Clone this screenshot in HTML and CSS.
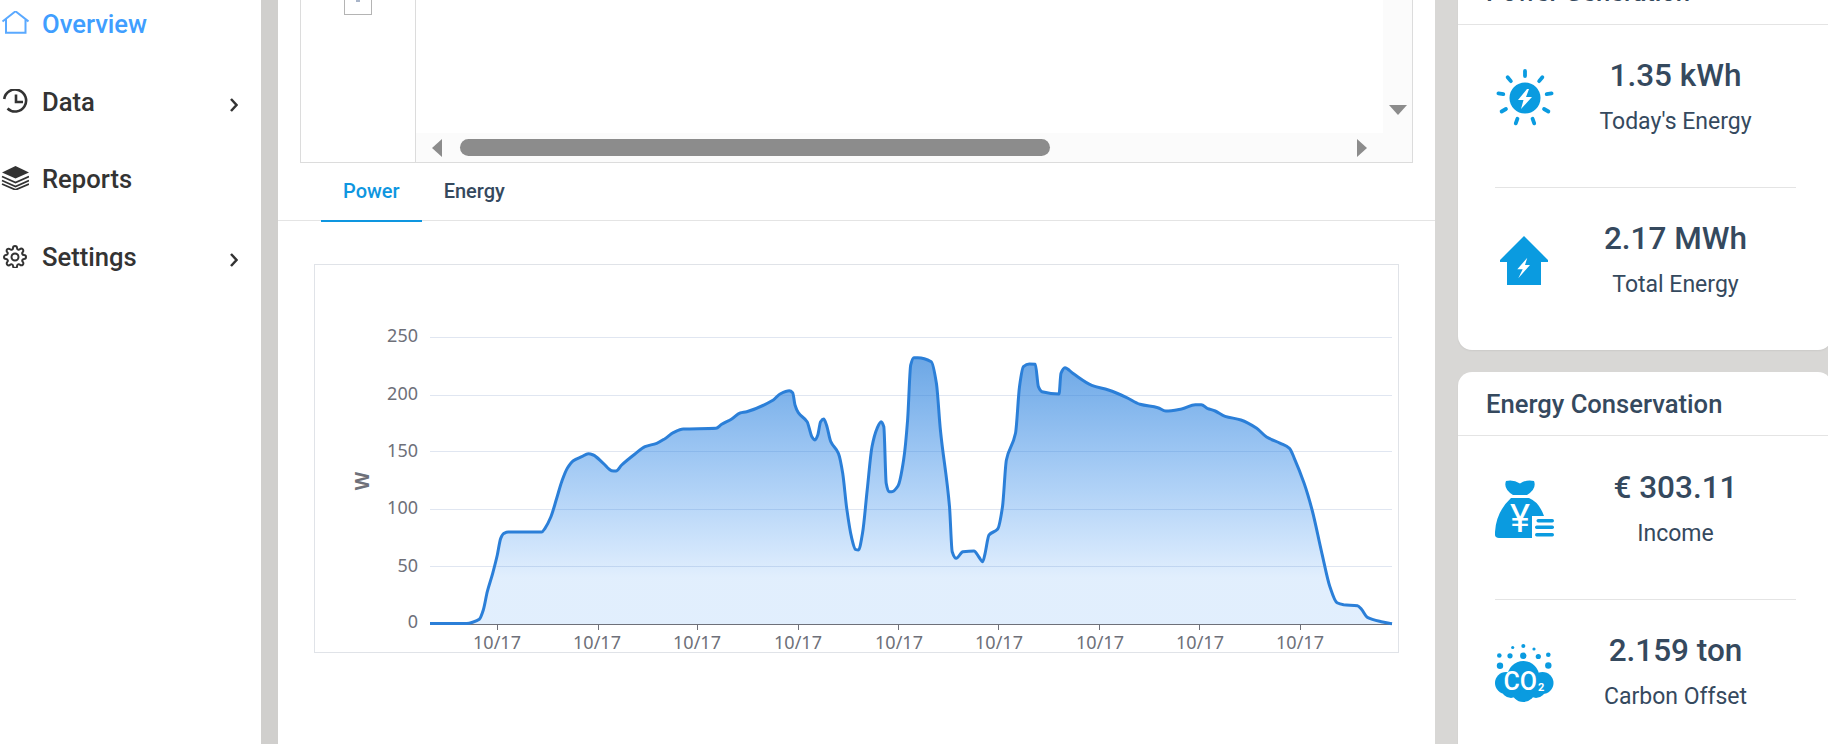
FILE: index.html
```html
<!DOCTYPE html>
<html lang="en">
<head>
<meta charset="utf-8">
<title>Overview</title>
<link rel="stylesheet" href="styles.css">
</head>
<body>
<div class="page">
  <nav class="sidebar">
    <a class="nav-item active">
      <svg class="nav-icon" viewBox="0 0 28 24"><path d="M1.500 10.500 14.500 .3 27.500 10.500M5 8V21.800H24.500V8" fill="none" stroke="#5aa9ff" stroke-width="2"/></svg>
      <span>Overview</span>
    </a>
    <a class="nav-item">
      <svg class="nav-icon" viewBox="0 0 28 24"><path d="M6.500 19.500A11 11 0 1 0 3.200 10" fill="none" stroke="#333" stroke-width="2.600"/><path d="M15 5.500V13H22" fill="none" stroke="#333" stroke-width="2.600"/></svg>
      <span>Data</span>
      <svg class="chevron" viewBox="0 0 8 14"><path d="M1 1 6.500 7 1 13" fill="none" stroke="#333" stroke-width="2.500"/></svg>
    </a>
    <a class="nav-item">
      <svg class="nav-icon" viewBox="0 0 28 24"><path d="M14.500 0 28 6.500 14.500 12.500 1 6.500Z" fill="#333"/><path d="M1 10.500 14.500 16.500 28 10.500M1 14.500 14.500 20.500 28 14.500M1 18 14.500 23.800 28 18" fill="none" stroke="#333" stroke-width="1.800"/></svg>
      <span>Reports</span>
    </a>
    <a class="nav-item">
      <svg class="nav-icon" viewBox="-2 -1 28 24"><g fill="none" stroke="#333" stroke-width="2"><circle cx="12" cy="12" r="3.500"/><path d="M19.400 15a1.650 1.650 0 0 0 .33 1.820l.06.06a2 2 0 0 1 0 2.830 2 2 0 0 1-2.830 0l-.06-.06a1.650 1.650 0 0 0-1.820-.33 1.650 1.650 0 0 0-1 1.510V21a2 2 0 0 1-2 2 2 2 0 0 1-2-2v-.09A1.650 1.650 0 0 0 9 19.400a1.650 1.650 0 0 0-1.820.33l-.06.06a2 2 0 0 1-2.830 0 2 2 0 0 1 0-2.830l.06-.06a1.650 1.650 0 0 0 .33-1.820 1.650 1.650 0 0 0-1.510-1H3a2 2 0 0 1-2-2 2 2 0 0 1 2-2h.09A1.650 1.650 0 0 0 4.600 9a1.650 1.650 0 0 0-.33-1.820l-.06-.06a2 2 0 0 1 0-2.830 2 2 0 0 1 2.830 0l.06.06a1.650 1.650 0 0 0 1.820.33H9a1.650 1.650 0 0 0 1-1.510V3a2 2 0 0 1 2-2 2 2 0 0 1 2 2v.09a1.650 1.650 0 0 0 1 1.510 1.650 1.650 0 0 0 1.820-.33l.06-.06a2 2 0 0 1 2.830 0 2 2 0 0 1 0 2.830l-.06.06a1.650 1.650 0 0 0-.33 1.820V9a1.650 1.650 0 0 0 1.510 1H21a2 2 0 0 1 2 2 2 2 0 0 1-2 2h-.09a1.650 1.650 0 0 0-1.510 1z"/></g></svg>
      <span>Settings</span>
      <svg class="chevron" viewBox="0 0 8 14"><path d="M1 1 6.500 7 1 13" fill="none" stroke="#333" stroke-width="2.500"/></svg>
    </a>
  </nav>

  <main class="main">
    <section class="table-box">
      <div class="table-fixed"><div class="checkbox"><i class="check-mark"></i></div></div>
      <div class="table-body">
        <div class="table-upper">
          <div class="table-cells"></div>
          <div class="vtrack"><i class="arrow-down"></i></div>
        </div>
        <div class="htrack"><i class="arrow-left"></i><div class="thumb"></div><i class="arrow-right"></i></div>
      </div>
    </section>

    <div class="tabs">
      <div class="tab active">Power</div>
      <div class="tab">Energy</div>
    </div>

    <section class="chart-frame">
      <svg class="chart" viewBox="315 265 1083 387">
        <defs>
          <linearGradient id="areaFill" gradientUnits="userSpaceOnUse" x1="0" y1="345" x2="0" y2="578">
            <stop offset="0" stop-color="#2b7fd8" stop-opacity=".72"/>
            <stop offset="1" stop-color="#1a80f0" stop-opacity=".13"/>
          </linearGradient>
        </defs>
        <g class="grid">
          <line x1="430" x2="1392" y1="337.500" y2="337.500"/>
          <line x1="430" x2="1392" y1="395.500" y2="395.500"/>
          <line x1="430" x2="1392" y1="451.500" y2="451.500"/>
          <line x1="430" x2="1392" y1="509.500" y2="509.500"/>
          <line x1="430" x2="1392" y1="566.500" y2="566.500"/>
        </g>
        <path id="chartArea" fill="url(#areaFill)"/>
        <g class="axis">
          <line x1="430" x2="1392" y1="624.500" y2="624.500"/>
          <line x1="497.500" x2="497.500" y1="624" y2="630"/>
          <line x1="598.500" x2="598.500" y1="624" y2="630"/>
          <line x1="697.500" x2="697.500" y1="624" y2="630"/>
          <line x1="798.500" x2="798.500" y1="624" y2="630"/>
          <line x1="898.500" x2="898.500" y1="624" y2="630"/>
          <line x1="998.500" x2="998.500" y1="624" y2="630"/>
          <line x1="1099.500" x2="1099.500" y1="624" y2="630"/>
          <line x1="1199.500" x2="1199.500" y1="624" y2="630"/>
          <line x1="1300.500" x2="1300.500" y1="624" y2="630"/>
        </g>
        <path id="chartLine" class="series"/>
        <g class="y-labels">
          <text x="418" y="335">250</text>
          <text x="418" y="393">200</text>
          <text x="418" y="450">150</text>
          <text x="418" y="507">100</text>
          <text x="418" y="565">50</text>
          <text x="418" y="621">0</text>
        </g>
        <g class="x-labels">
          <text x="497" y="642">10/17</text>
          <text x="597" y="642">10/17</text>
          <text x="697" y="642">10/17</text>
          <text x="798" y="642">10/17</text>
          <text x="899" y="642">10/17</text>
          <text x="999" y="642">10/17</text>
          <text x="1100" y="642">10/17</text>
          <text x="1200" y="642">10/17</text>
          <text x="1300" y="642">10/17</text>
        </g>
        <text class="y-name" transform="translate(362 481) rotate(-90)">W</text>
      </svg>
    </section>
  </main>

  <aside class="side">
    <section class="card card-first">
      <h2 class="card-title">Power Generation</h2>
      <div class="stat">
        <svg class="stat-icon" viewBox="0 0 60 60">
          <g class="sun-rays">
            <line x1="30" y1="8" x2="30" y2="3"/>
            <line x1="30" y1="8" x2="30" y2="3" transform="rotate(40 30 30)"/>
            <line x1="30" y1="8" x2="30" y2="3" transform="rotate(80 30 30)"/>
            <line x1="30" y1="8" x2="30" y2="3" transform="rotate(120 30 30)"/>
            <line x1="30" y1="8" x2="30" y2="3" transform="rotate(160 30 30)"/>
            <line x1="30" y1="8" x2="30" y2="3" transform="rotate(200 30 30)"/>
            <line x1="30" y1="8" x2="30" y2="3" transform="rotate(240 30 30)"/>
            <line x1="30" y1="8" x2="30" y2="3" transform="rotate(280 30 30)"/>
            <line x1="30" y1="8" x2="30" y2="3" transform="rotate(320 30 30)"/>
          </g>
          <circle cx="30" cy="30" r="15.500" fill="#0a9be0"/>
          <path d="M32 21 23 32H28.500L26 41 37 29H31L34 21Z" fill="#fff"/>
        </svg>
        <div class="stat-text"><div class="stat-value">1.35 kWh</div><div class="stat-label">Today's Energy</div></div>
      </div>
      <div class="stat">
        <svg class="stat-icon" viewBox="0 0 60 60">
          <path d="M29 5 53 29V31H46V54H12V31H5V29Z" fill="#0a9be0"/>
          <path d="M32.300 26.700 22.300 38.300H27.700L23.300 47.300 35 34H30L32.300 26.700Z" fill="#fff"/>
        </svg>
        <div class="stat-text"><div class="stat-value">2.17 MWh</div><div class="stat-label">Total Energy</div></div>
      </div>
    </section>

    <section class="card">
      <h2 class="card-title">Energy Conservation</h2>
      <div class="stat">
        <svg class="stat-icon" viewBox="0 0 60 60">
          <path d="M11 1Q18 -1 25 3.500 32 -1 39 1 42 9 32 15H18Q8 9 11 1Z" fill="#0a9be0"/>
          <path d="M16 18H34Q44 22 49 36V58H4Q-1 58 0 52 1 32 16 18Z" fill="#0a9be0"/>
          <rect x="37" y="36" width="23" height="24" fill="#fff"/>
          <rect x="41.500" y="39" width="17.500" height="3.500" rx="1.700" fill="#0a9be0"/>
          <rect x="40" y="45.500" width="19" height="3.500" rx="1.700" fill="#0a9be0"/>
          <rect x="40" y="53" width="19" height="3.500" rx="1.700" fill="#0a9be0"/>
          <text class="yen" x="25" y="52">¥</text>
        </svg>
        <div class="stat-text"><div class="stat-value">€ 303.11</div><div class="stat-label">Income</div></div>
      </div>
      <div class="stat">
        <svg class="stat-icon" viewBox="0 0 60 60">
          <g fill="#0a9be0">
            <circle cx="28.300" cy="3" r="2"/><circle cx="17.700" cy="4.500" r="1.600"/><circle cx="39" cy="6" r="1.600"/>
            <circle cx="4.300" cy="12.500" r="2.300"/><circle cx="15" cy="12.800" r="2.600"/><circle cx="28.300" cy="12.800" r="3.200"/><circle cx="43.300" cy="13.500" r="2.600"/><circle cx="53.300" cy="11.800" r="2.300"/>
            <circle cx="5" cy="22.800" r="3.200"/><circle cx="53.300" cy="22.500" r="3.200"/>
            <circle cx="28.300" cy="34" r="16"/><circle cx="11" cy="40" r="11"/><circle cx="47.500" cy="40" r="11"/><circle cx="28.300" cy="47" r="12"/><circle cx="16" cy="45" r="10"/><circle cx="41" cy="45" r="10"/>
          </g>
          <text class="co" x="8.500" y="47">CO</text>
          <text class="co-sub" x="43" y="48">2</text>
        </svg>
        <div class="stat-text"><div class="stat-value">2.159 ton</div><div class="stat-label">Carbon Offset</div></div>
      </div>
    </section>
  </aside>
</div>
<script src="chart.js"></script>
</body>
</html>
```
FILE: styles.css
```css
* { box-sizing: border-box; }
html, body { margin: 0; height: 744px; overflow: hidden; }
body { font-family: Roboto, "Liberation Sans", sans-serif; background: #d8d7d5; color: #35495e; }

.page { display: flex; height: 744px; overflow: hidden; }

/* sidebar */
.sidebar { width: 278px; flex: none; background: #fff; border-right: 17px solid #d0cfcd; }
.nav-item { display: flex; align-items: center; height: 77.6px; padding-left: 1px; font-size: 25.600px; font-weight: 500; color: #333; }
.nav-item:first-child { margin-top: -14.500px; }
.nav-item.active { color: #409eff; }
.nav-icon { width: 28px; height: 24px; margin: 0 13px 2px 0; flex: none; }
.chevron { width: 8px; height: 14px; margin: 6px 23px 0 auto; }

/* main column */
.main { width: 1157px; flex: none; height: 744px; background: #fff; }

.table-box { display: flex; height: 163px; margin: 0 22px; border: 1px solid #dcdcdc; border-top: 0; overflow: hidden; }
.table-fixed { width: 115px; flex: none; border-right: 1px solid #dcdcdc; }
.checkbox { display: flex; justify-content: center; width: 28px; height: 28px; margin: -13px 0 0 43px; border: 1px solid #b4b4b4; }
.check-mark { width: 4px; height: 2px; margin-top: 12px; background: #a9b5c9; }
.table-body { flex: 1; display: flex; flex-direction: column; }
.table-upper { flex: 1; display: flex; }
.table-cells { flex: 1; }
.vtrack { width: 29px; background: #fbfbfb; display: flex; justify-content: center; align-items: flex-end; padding-bottom: 18px; }
.htrack { height: 29px; background: #fbfbfb; display: flex; align-items: center; padding: 0 45px 0 16px; }
.arrow-down { width: 0; height: 0; border-style: solid; border-width: 10px 9.500px 0; border-color: #8c8c8c transparent transparent; }
.arrow-left { width: 0; height: 0; border-style: solid; border-width: 9.500px 10px 9.500px 0; border-color: transparent #8c8c8c transparent transparent; }
.arrow-right { width: 0; height: 0; margin-left: auto; border-style: solid; border-width: 9.500px 0 9.500px 10px; border-color: transparent transparent transparent #8c8c8c; }
.thumb { width: 590px; height: 17px; margin-left: 18px; border-radius: 9px; background: #8c8c8c; }

.tabs { display: flex; height: 59px; padding-left: 43px; background: linear-gradient(#e4e4e4, #e4e4e4) 0 57px / 100% 1px no-repeat; }
.tab { display: flex; align-items: center; padding: 0 22px 3px; font-size: 20px; font-weight: 500; color: #35495e; }
.tab.active { color: #0e96e0; border-bottom: 2px solid #0e96e0; padding-bottom: 1px; }

.chart-frame { height: 389px; margin: 42px 36px 0; border: 1px solid #e0e3e8; }
.chart { display: block; width: 1083px; height: 387px; overflow: visible; }
.grid line { stroke: #e0e6f1; stroke-width: 1; }
.axis line { stroke: #6e7079; stroke-width: 1; }
.series { fill: none; stroke: #2b7fd8; stroke-width: 3; stroke-linejoin: round; }
.y-labels text, .x-labels text { font-family: "Noto Sans", sans-serif; font-size: 18px; fill: #6e7079; dominant-baseline: central; }
.y-labels text { text-anchor: end; }
.x-labels text { text-anchor: middle; }
.y-name { font-family: "Noto Sans", sans-serif; font-size: 19px; font-weight: 700; fill: #6e7079; text-anchor: middle; dominant-baseline: central; }

/* right column: the cards run a few pixels past the window edge */
.side { width: 374px; flex: none; margin-left: 23px; }
.card { background: #fff; border-radius: 14px; box-shadow: 0 1px 2px rgba(0, 0, 0, .06); }
.card-first { margin-top: -39.500px; margin-bottom: 22.500px; }
.card-title { height: 64px; margin: 0; padding: 0 0 0 28px; display: flex; align-items: center; border-bottom: 1px solid #e4e4e4; font-size: 25.600px; font-weight: 500; color: #35495e; }
.stat { display: flex; align-items: center; height: 162.500px; margin: 0 36px 0 37px; padding-bottom: 13px; }
.stat + .stat { border-top: 1px solid #e4e4e4; }
.stat-icon { width: 60px; height: 60px; flex: none; margin-bottom: 2px; }
.stat-text { flex: 1; text-align: center; }
.stat-value { font-size: 31.500px; font-weight: 500; line-height: 46px; color: #35495e; }
.stat-label { font-size: 23px; line-height: 46px; color: #35495e; }
.sun-rays line { stroke: #0a9be0; stroke-width: 3.800; stroke-linecap: round; }
.yen { font-family: Roboto, sans-serif; font-size: 38px; font-weight: 400; fill: #fff; text-anchor: middle; }
.co { font-family: Roboto, sans-serif; font-size: 25px; font-weight: 500; fill: #fff; }
.co-sub { font-family: Roboto, sans-serif; font-size: 11px; font-weight: 700; fill: #fff; }
```
FILE: chart.js
```js
// Power series, in chart pixel coordinates (x, y).
var points = [
  [430,623.5],[466.7,623.5],[473.3,622],[479.3,619.3],[483.3,610],[487.3,591.7],[492.7,573.3],[497.3,555],
  [500.7,538.3],[504,533.3],[508.3,532],[541.7,532],[545,528.3],[550.7,517.3],[556.7,498.3],[561.7,481.7],
  [567.3,468.3],[573.3,460.7],[581.7,456.7],[588.3,453.7],[593.3,455],[603.3,463.3],[611.7,470.7],[616,471],
  [621.7,465],[635,454],[645,446.7],[656.7,443.3],[665,438.7],[673.3,432.7],[683.3,429],[716,428.3],
  [721.7,424.3],[731.7,419],[740,413],[746.7,411.7],[773.3,400],[780,394],[789.3,390.7],[792.7,392.7],
  [795,405],[798.3,412.7],[807.1,421.7],[811.9,436.7],[815,440],[817.8,435],[820.6,421.7],[823.7,419],
  [826.5,425],[830.8,441.7],[838.4,453.3],[842.7,473.3],[846.7,508.3],[851.4,536.7],[855.4,549.3],[858.5,550],
  [862.5,533.3],[867.2,490],[872,446.7],[877.1,428.3],[881.1,421.7],[883.8,426.7],[886.2,483.3],[889,491.7],
  [891.7,491.7],[898.1,485.7],[903.6,460],[907.6,420],[910.7,365],[913.9,357.7],[917.8,357.7],[931.3,361.7],
  [936.4,383.3],[940.4,430],[949.5,506.7],[952.2,551.7],[956.2,558.3],[962.9,551.7],[974,551],[978.7,556.7],
  [982.7,561.7],[985.1,553.3],[989,535],[997.7,529],[1002.5,506.7],[1006.4,460],[1015.5,433.3],[1019.5,386.7],
  [1023.4,366.7],[1029.3,364],[1035.3,364.3],[1038.4,386.7],[1042,391.7],[1059,394],[1061,373.3],[1064.9,367.7],
  [1072.8,373.3],[1091.8,385.3],[1108.4,390],[1126.2,397.3],[1140,404.3],[1157.8,407.7],[1165.8,411],[1181.6,409],
  [1195.4,404.7],[1201.3,404.7],[1207.3,408.3],[1215.2,411],[1225.1,416.3],[1240.9,420],[1256.7,428.3],[1266.6,437],
  [1280.4,443.3],[1289.5,448.3],[1294.3,458.3],[1304.1,483.3],[1312.1,510],[1321.9,553.3],[1329.9,586.7],[1337,602.7],
  [1343.7,604.7],[1357.5,605.7],[1361.5,609.3],[1367.4,617.3],[1381.3,621.7],[1392,623.7]
];

// Monotone cubic path: it passes through every point without overshooting.
function smooth(p) {
  var slopes = [], tangents = [], i;
  for (i = 0; i < p.length - 1; i++) {
    slopes.push((p[i + 1][1] - p[i][1]) / (p[i + 1][0] - p[i][0]));
  }
  tangents.push(slopes[0]);
  for (i = 1; i < p.length - 1; i++) {
    var a = slopes[i - 1], b = slopes[i];
    tangents.push(a * b <= 0 ? 0 : 2 * a * b / (a + b));
  }
  tangents.push(slopes[slopes.length - 1]);

  var d = "M" + p[0][0] + " " + p[0][1];
  for (i = 0; i < p.length - 1; i++) {
    var h = (p[i + 1][0] - p[i][0]) / 3;
    d += "C" + (p[i][0] + h).toFixed(1) + " " + (p[i][1] + tangents[i] * h).toFixed(1) + " " +
         (p[i + 1][0] - h).toFixed(1) + " " + (p[i + 1][1] - tangents[i + 1] * h).toFixed(1) + " " +
         p[i + 1][0] + " " + p[i + 1][1];
  }
  return d;
}

var linePath = smooth(points);
document.getElementById("chartLine").setAttribute("d", linePath);
document.getElementById("chartArea").setAttribute("d", linePath + "L1392 624L430 624Z");
```
